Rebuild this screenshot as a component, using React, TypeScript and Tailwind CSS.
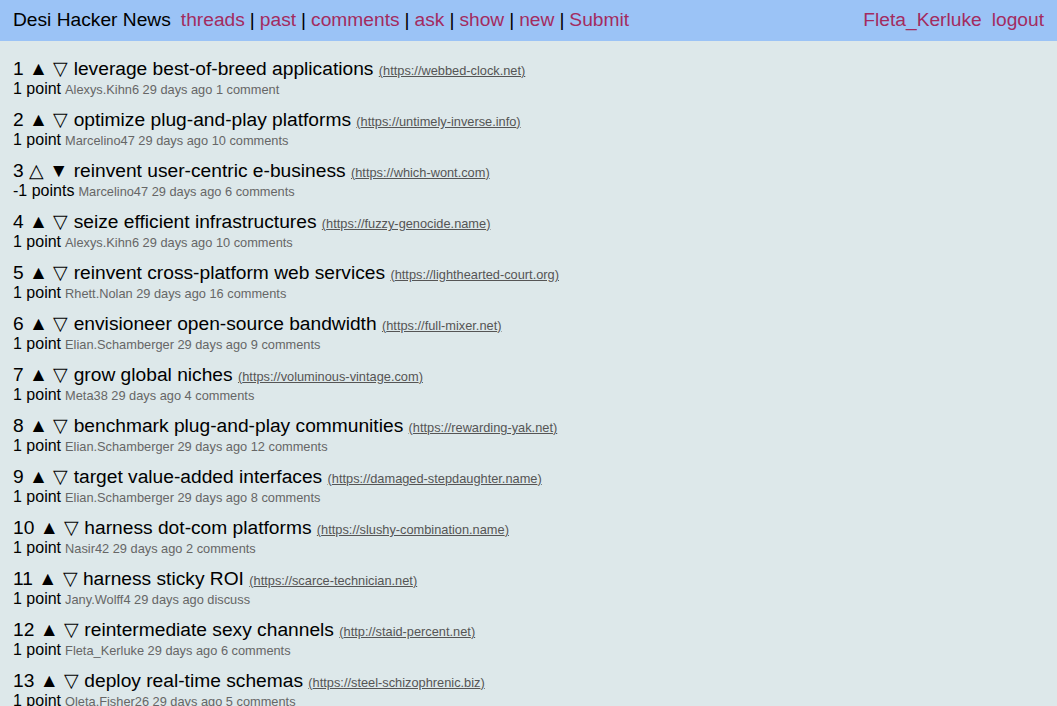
const stories = [
  { t: "leverage best-of-breed applications", u: "https://webbed-clock.net", p: 1, by: "Alexys.Kihn6", c: "1 comment" },
  { t: "optimize plug-and-play platforms", u: "https://untimely-inverse.info", p: 1, by: "Marcelino47", c: "10 comments" },
  { t: "reinvent user-centric e-business", u: "https://which-wont.com", p: -1, by: "Marcelino47", c: "6 comments", down: true },
  { t: "seize efficient infrastructures", u: "https://fuzzy-genocide.name", p: 1, by: "Alexys.Kihn6", c: "10 comments" },
  { t: "reinvent cross-platform web services", u: "https://lighthearted-court.org", p: 1, by: "Rhett.Nolan", c: "16 comments" },
  { t: "envisioneer open-source bandwidth", u: "https://full-mixer.net", p: 1, by: "Elian.Schamberger", c: "9 comments" },
  { t: "grow global niches", u: "https://voluminous-vintage.com", p: 1, by: "Meta38", c: "4 comments" },
  { t: "benchmark plug-and-play communities", u: "https://rewarding-yak.net", p: 1, by: "Elian.Schamberger", c: "12 comments" },
  { t: "target value-added interfaces", u: "https://damaged-stepdaughter.name", p: 1, by: "Elian.Schamberger", c: "8 comments" },
  { t: "harness dot-com platforms", u: "https://slushy-combination.name", p: 1, by: "Nasir42", c: "2 comments" },
  { t: "harness sticky ROI", u: "https://scarce-technician.net", p: 1, by: "Jany.Wolff4", c: "discuss" },
  { t: "reintermediate sexy channels", u: "http://staid-percent.net", p: 1, by: "Fleta_Kerluke", c: "6 comments" },
  { t: "deploy real-time schemas", u: "https://steel-schizophrenic.biz", p: 1, by: "Oleta.Fisher26", c: "5 comments" },
];

const link = "text-[#a32b60]";

export default function App() {
  return (
    <div className="h-[706px] overflow-hidden bg-[#dde8ea] font-['Liberation_Sans',Arial,sans-serif] text-black">
      <header className="flex items-center h-[41px] bg-[#9bc3f6] px-[13px] text-[19.2px]">
        <span className="mr-[10px]">Desi Hacker News</span>
        <nav className="flex items-center gap-[5px]">
          <a className={link}>threads</a>|<a className={link}>past</a>|<a className={link}>comments</a>|
          <a className={link}>ask</a>|<a className={link}>show</a>|<a className={link}>new</a>|<a className={link}>Submit</a>
        </nav>
        <div className="ml-auto flex gap-[10px]">
          <a className={link}>Fleta_Kerluke</a>
          <a className={link}>logout</a>
        </div>
      </header>
      <main className="px-[13px] pt-[17px] flex flex-col gap-[11px]">
        {stories.map((s, i) => (
          <div key={i}>
            <div className="h-[22px] text-[19.2px] leading-[22px] whitespace-nowrap">
              {i + 1} {s.down ? "△ ▼" : "▲ ▽"} {s.t}{" "}
              <span className="text-[12.8px] text-[#555] underline">({s.u})</span>
            </div>
            <div className="h-[18px] flex items-baseline gap-[4px] leading-[18px] whitespace-nowrap">
              <span className="text-[16px]">
                {s.p} {s.p === 1 ? "point" : "points"}
              </span>
              <span className="text-[12.8px] text-[#666]">
                {s.by} 29 days ago {s.c}
              </span>
            </div>
          </div>
        ))}
      </main>
    </div>
  );
}
